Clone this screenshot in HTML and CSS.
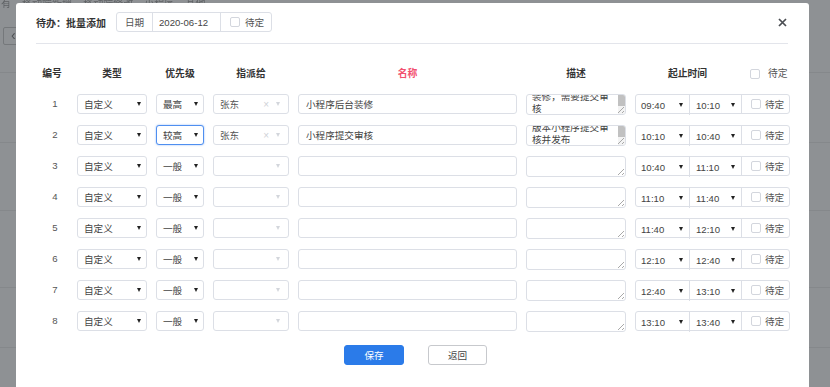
FILE: index.html
```html
<!DOCTYPE html>
<html lang="zh-CN">
<head>
  <meta charset="UTF-8" />
  <title>待办：批量添加</title>
  <link rel="stylesheet" href="styles.css">
</head>
<body>

  <!-- dimmed page behind the dialog -->
  <div class="page">
    <div class="page-top">有&nbsp;&nbsp;&nbsp;&nbsp;移动端新增&nbsp;&nbsp;&nbsp;&nbsp;移动端修改&nbsp;&nbsp;&nbsp;&nbsp;小程序&nbsp;&nbsp;&nbsp;&nbsp;其他</div>
    <div class="page-back">&lsaquo;</div>
    <div class="page-line" style="height:28px"></div>
    <div class="page-line" style="height:70px"></div>
    <div class="page-line" style="height:68px"></div>
    <div class="page-line" style="height:77px"></div>
    <div class="page-line" style="height:60px"></div>
  </div>

  <div class="modal">
    <div class="modal-head">
      <h3 class="modal-title">待办：批量添加</h3>
      <div class="group">
        <span class="addon">日期</span>
        <span class="group-field">2020-06-12</span>
        <span class="addon check"><span class="box"></span>待定</span>
      </div>
      <span class="close">
        <svg width="9" height="9" viewBox="0 0 9 9"><path d="M1 1 8 8M8 1 1 8" stroke="#4a4d52" stroke-width="1.7" fill="none"/></svg>
      </span>
    </div>
    <div class="modal-line"></div>

    <div class="grid">
      <div class="th">编号</div>
      <div class="th">类型</div>
      <div class="th">优先级</div>
      <div class="th">指派给</div>
      <div class="th th-red">名称</div>
      <div class="th">描述</div>
      <div class="th th-time"><span class="th-range">起止时间</span><span class="th-check"><span class="box"></span>待定</span></div>

      <!-- row 1 -->
      <div class="num">1</div>
      <div class="sel"><span>自定义</span><i class="caret"></i></div>
      <div class="sel"><span>最高</span><i class="caret"></i></div>
      <div class="picker"><span>张东</span><span class="picker-x">×</span><i class="caret caret-light"></i></div>
      <input class="field" type="text" value="小程序后台装修">
      <div class="memo"><p>完成小程序的后台<br>装修，需要提交审<br>核</p><span class="thumb"></span><span class="grip"></span></div>
      <div class="tgroup"><div class="tsel"><span>09:40</span><i class="caret"></i></div><div class="tsel"><span>10:10</span><i class="caret"></i></div><span class="tcheck"><span class="box"></span>待定</span></div>

      <!-- row 2 -->
      <div class="num">2</div>
      <div class="sel"><span>自定义</span><i class="caret"></i></div>
      <div class="sel sel-focus"><span>较高</span><i class="caret"></i></div>
      <div class="picker"><span>张东</span><span class="picker-x">×</span><i class="caret caret-light"></i></div>
      <input class="field" type="text" value="小程序提交审核">
      <div class="memo"><p>装修完成后需要将<br>版本小程序提交审<br>核并发布</p><span class="thumb"></span><span class="grip"></span></div>
      <div class="tgroup"><div class="tsel"><span>10:10</span><i class="caret"></i></div><div class="tsel"><span>10:40</span><i class="caret"></i></div><span class="tcheck"><span class="box"></span>待定</span></div>

      <!-- row 3 -->
      <div class="num">3</div>
      <div class="sel"><span>自定义</span><i class="caret"></i></div>
      <div class="sel"><span>一般</span><i class="caret"></i></div>
      <div class="picker"><span></span><i class="caret caret-light"></i></div>
      <input class="field" type="text" value="">
      <div class="memo"><span class="grip"></span></div>
      <div class="tgroup"><div class="tsel"><span>10:40</span><i class="caret"></i></div><div class="tsel"><span>11:10</span><i class="caret"></i></div><span class="tcheck"><span class="box"></span>待定</span></div>

      <!-- row 4 -->
      <div class="num">4</div>
      <div class="sel"><span>自定义</span><i class="caret"></i></div>
      <div class="sel"><span>一般</span><i class="caret"></i></div>
      <div class="picker"><span></span><i class="caret caret-light"></i></div>
      <input class="field" type="text" value="">
      <div class="memo"><span class="grip"></span></div>
      <div class="tgroup"><div class="tsel"><span>11:10</span><i class="caret"></i></div><div class="tsel"><span>11:40</span><i class="caret"></i></div><span class="tcheck"><span class="box"></span>待定</span></div>

      <!-- row 5 -->
      <div class="num">5</div>
      <div class="sel"><span>自定义</span><i class="caret"></i></div>
      <div class="sel"><span>一般</span><i class="caret"></i></div>
      <div class="picker"><span></span><i class="caret caret-light"></i></div>
      <input class="field" type="text" value="">
      <div class="memo"><span class="grip"></span></div>
      <div class="tgroup"><div class="tsel"><span>11:40</span><i class="caret"></i></div><div class="tsel"><span>12:10</span><i class="caret"></i></div><span class="tcheck"><span class="box"></span>待定</span></div>

      <!-- row 6 -->
      <div class="num">6</div>
      <div class="sel"><span>自定义</span><i class="caret"></i></div>
      <div class="sel"><span>一般</span><i class="caret"></i></div>
      <div class="picker"><span></span><i class="caret caret-light"></i></div>
      <input class="field" type="text" value="">
      <div class="memo"><span class="grip"></span></div>
      <div class="tgroup"><div class="tsel"><span>12:10</span><i class="caret"></i></div><div class="tsel"><span>12:40</span><i class="caret"></i></div><span class="tcheck"><span class="box"></span>待定</span></div>

      <!-- row 7 -->
      <div class="num">7</div>
      <div class="sel"><span>自定义</span><i class="caret"></i></div>
      <div class="sel"><span>一般</span><i class="caret"></i></div>
      <div class="picker"><span></span><i class="caret caret-light"></i></div>
      <input class="field" type="text" value="">
      <div class="memo"><span class="grip"></span></div>
      <div class="tgroup"><div class="tsel"><span>12:40</span><i class="caret"></i></div><div class="tsel"><span>13:10</span><i class="caret"></i></div><span class="tcheck"><span class="box"></span>待定</span></div>

      <!-- row 8 -->
      <div class="num">8</div>
      <div class="sel"><span>自定义</span><i class="caret"></i></div>
      <div class="sel"><span>一般</span><i class="caret"></i></div>
      <div class="picker"><span></span><i class="caret caret-light"></i></div>
      <input class="field" type="text" value="">
      <div class="memo"><span class="grip"></span></div>
      <div class="tgroup"><div class="tsel"><span>13:10</span><i class="caret"></i></div><div class="tsel"><span>13:40</span><i class="caret"></i></div><span class="tcheck"><span class="box"></span>待定</span></div>
    </div>

    <div class="actions">
      <button class="btn btn-primary">保存</button>
      <button class="btn">返回</button>
    </div>
  </div>

</body>
</html>
```

FILE: styles.css
```css
/* General */
* {
  box-sizing: border-box;
}
body {
  margin: 0;
  height: 387px;
  overflow: hidden;
  background-color: #8e9194;
  font-family: "Liberation Sans", "Noto Sans CJK SC", sans-serif;
  font-size: 9.6px;
  color: #444;
}

/* Page behind the overlay */
.page {
  position: fixed;
  top: 0;
  left: 0;
  right: 0;
  bottom: 0;
  z-index: 0;
}
.page-top {
  height: 27px;
  padding-left: 1px;
  font-size: 10px;
  line-height: 8px;
  color: #5f6265;
  white-space: nowrap;
}
.page-back {
  width: 22px;
  height: 18px;
  margin-left: 3px;
  border: 1px solid #75787b;
  border-radius: 2px;
  color: #4d5053;
  font-size: 14px;
  line-height: 14px;
  padding-left: 7px;
}
.page-line {
  border-bottom: 1px solid #85888b;
}

/* Dialog */
.modal {
  position: relative;
  z-index: 1;
  width: 793px;
  height: 400px;
  margin: 3px 0 0 16px;
  padding: 9px 19px 0 20px;
  background-color: #fff;
  border-radius: 3px 3px 0 0;
}
.modal-head {
  display: flex;
  align-items: center;
  height: 20px;
}
.modal-title {
  margin: 0 10px 0 0;
  font-size: 10px;
  font-weight: bold;
  color: #333;
}
.close {
  margin-left: auto;
  margin-right: 3px;
  width: 9px;
  height: 9px;
  display: flex;
}
.modal-line {
  height: 1px;
  margin: 11px 2px 0 0;
  background-color: #e3e5eb;
}

/* Date group */
.group {
  display: flex;
  height: 20px;
  border: 1px solid #dcdfe6;
  border-radius: 3px;
}
.addon {
  display: flex;
  align-items: center;
  justify-content: center;
  width: 35px;
  color: #555;
}
.group-field {
  display: flex;
  align-items: center;
  width: 69px;
  padding-left: 6px;
  border-left: 1px solid #dcdfe6;
  border-right: 1px solid #dcdfe6;
  color: #444;
}
.addon.check {
  width: 50px;
  justify-content: flex-start;
  padding-left: 9px;
  gap: 5px;
}
.box {
  display: inline-block;
  width: 10px;
  height: 10px;
  border: 1px solid #d3d6dd;
  border-radius: 2px;
  background-color: #fff;
}

/* Table */
.grid {
  display: grid;
  grid-template-columns: 32px 70px 48px 76px 219px 100px 155px;
  grid-auto-rows: 20px;
  column-gap: 9px;
  row-gap: 11px;
  margin-top: 19px;
}
.th {
  height: 21px;
  line-height: 21px;
  text-align: center;
  font-weight: bold;
  color: #333;
  font-size: 9.8px;
}
.th-red {
  color: #f2506f;
}
.th-time {
  display: flex;
}
.th-range {
  width: 105px;
  text-align: center;
}
.th-check {
  display: flex;
  align-items: center;
  gap: 8px;
  padding-left: 10px;
  font-weight: normal;
  color: #555;
}
.num {
  line-height: 20px;
  text-align: center;
  padding-left: 6px;
  color: #555;
}
.sel,
.picker,
.tsel {
  display: flex;
  align-items: center;
  justify-content: space-between;
  height: 20px;
  padding: 0 5px 0 6px;
  border: 1px solid #dcdfe6;
  border-radius: 3px;
  background-color: #fff;
  color: #444;
}
.sel-focus {
  border-color: #4f8ff0;
  box-shadow: 0 0 2px rgba(64, 132, 235, 0.6);
}
.caret {
  width: 0;
  height: 0;
  border-left: 2.5px solid transparent;
  border-right: 2.5px solid transparent;
  border-top: 4px solid #222;
}
.caret-light {
  border-top-color: #d3d6dc;
}
.picker {
  padding-right: 8px;
  color: #555;
}
.picker span:first-child {
  flex-grow: 1;
}
.picker-x {
  color: #cfd2d8;
  font-size: 10px;
  margin-right: 7px;
}
.field {
  height: 20px;
  margin: 0;
  padding: 0 7px;
  border: 1px solid #dcdfe6;
  border-radius: 3px;
  font: inherit;
  color: #444;
  outline: none;
}
.memo {
  position: relative;
  height: 21px;
  border: 1px solid #dcdfe6;
  border-radius: 3px;
  overflow: hidden;
}
.memo p {
  margin: -16.5px 0 0 0;
  padding-left: 5px;
  line-height: 12px;
  color: #444;
}
.thumb {
  position: absolute;
  top: 0;
  right: 0;
  width: 7px;
  height: 100%;
  background: linear-gradient(#c1c1c1 0, #c1c1c1 11px, #f3f3f3 11px);
}
.grip {
  position: absolute;
  right: 1px;
  bottom: 1px;
  width: 6px;
  height: 6px;
  background: linear-gradient(135deg, transparent 48%, #a9a9a9 48%, #a9a9a9 58%, transparent 58%, transparent 76%, #a9a9a9 76%, #a9a9a9 86%, transparent 86%);
}
.tgroup {
  display: flex;
  height: 20px;
  border: 1px solid #dcdfe6;
  border-radius: 3px;
}
.tsel {
  width: 53px;
  border: none;
  border-radius: 0;
  padding: 0 6px 0 5px;
  background: transparent;
}
.tsel + .tsel {
  width: 52px;
  padding-left: 6px;
  border-left: 1px solid #dcdfe6;
}
.tcheck {
  display: flex;
  align-items: center;
  gap: 4px;
  flex-grow: 1;
  padding-left: 9px;
  border-left: 1px solid #dcdfe6;
  color: #555;
}

/* Buttons */
.actions {
  display: flex;
  justify-content: center;
  gap: 24px;
  margin-top: 14px;
  padding-left: 5px;
}
.btn {
  width: 59px;
  height: 20px;
  padding: 0;
  border: 1px solid #c7c9cd;
  border-radius: 3px;
  background-color: #fff;
  font: inherit;
  color: #444;
}
.btn-primary {
  width: 60px;
  border-color: #2b7be9;
  background-color: #2b7be9;
  color: #fff;
}
```
